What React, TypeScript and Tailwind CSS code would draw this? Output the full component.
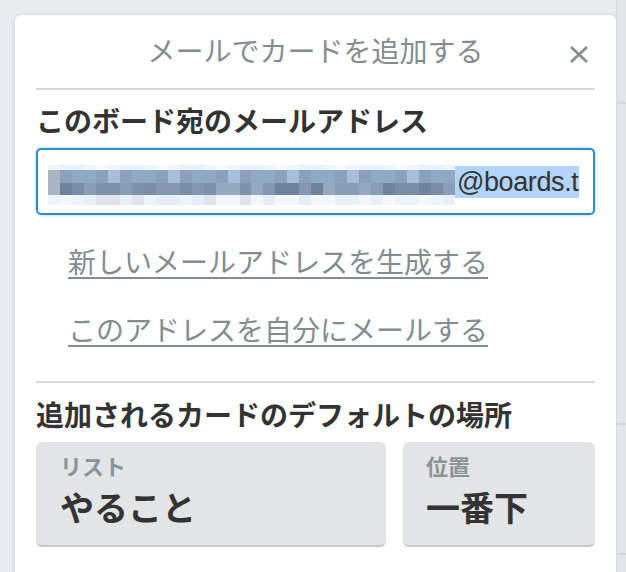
import React from "react";

const FONT = '"Liberation Sans", "Noto Sans CJK JP", sans-serif';

const rowDefs: { h: number; colors: string[] }[] = [
  { h: 5, colors: ["#eef5fc", "#e6f0fa", "#f3f8fd", "#e9f2fb", "#f6f9fd"] },
  { h: 13, colors: ["#8ea9c6", "#9ab3cf", "#7f96b2", "#a5bedb", "#8aa0bb", "#94aac4", "#7e8fa8"] },
  { h: 12, colors: ["#7a8da7", "#8a9db6", "#70839c", "#94a8c0", "#8597b0", "#7d91ab"] },
  { h: 10, colors: ["#f1f6fc", "#e5eef8", "#dfe4ea", "#edf4fb", "#e9eff6", "#f4f8fc"] },
];

function Mosaic() {
  const cols = 34;
  const w = 12;
  return (
    <div className="flex flex-col shrink-0 w-[407px] overflow-hidden">
      {rowDefs.map((row, r) => (
        <div key={r} className="flex">
          {Array.from({ length: cols }).map((_, i) => {
            let c = row.colors[(i * 7 + r * 3 + ((i * i) % 5)) % row.colors.length];
            if (i === 0 && (r === 1 || r === 2)) c = "#aab5c2";
            return (
              <div
                key={i}
                style={{ width: w, height: row.h, backgroundColor: c }}
              />
            );
          })}
        </div>
      ))}
    </div>
  );
}

export default function App() {
  return (
    <div
      className="w-[626px] h-[572px] bg-[#ebecf0] overflow-hidden flex"
      style={{ fontFamily: FONT }}
    >
      <div className="pl-[15px] pt-[15px] flex">
        <div className="w-[601px] h-[600px] bg-white rounded-[6px] shadow-[0_1px_5px_rgba(9,30,66,0.18)] flex flex-col">
          {/* header */}
          <div className="relative h-[73px] flex items-center justify-center">
            <span className="text-[28px] leading-[28px] text-[#838c91] pt-[2px]">
              メールでカードを追加する
            </span>
            <button className="absolute right-[27px] top-[31px] w-[20px] h-[17px] flex items-center justify-center">
              <svg width="20" height="17" viewBox="0 0 20 17">
                <path
                  d="M2 1 L18 16 M18 1 L2 16"
                  stroke="#838c91"
                  strokeWidth="2.6"
                  strokeLinecap="butt"
                />
              </svg>
            </button>
          </div>
          <div className="mx-[21px] h-[2px] bg-[#d6dadc]" />

          <div className="px-[21px] flex flex-col">
            <div className="mt-[19px] text-[28px] leading-[28px] font-bold text-[#333333]">
              このボード宛のメールアドレス
            </div>

            <div className="mt-[11px] h-[67px] border-2 border-[#298fca] rounded-[5px] shadow-[0_0_3px_rgba(41,143,202,0.5)] pl-[10px] flex items-start overflow-hidden">
              <div className="mt-[15px]">
                <Mosaic />
              </div>
              <span
                className="mt-[16px] bg-[#b3d4fc] text-[#333333] text-[27px] tracking-[-0.4px] leading-[32px] whitespace-nowrap pl-[2px] pr-[1px]"
                style={{ fontFamily: '"Liberation Sans", sans-serif' }}
              >
                @boards.t
              </span>
            </div>

            <div className="pl-[32px] flex flex-col items-start">
              <a className="mt-[35px] text-[28px] leading-[28px] text-[#838c91] underline decoration-2 underline-offset-[4px] cursor-pointer">
                新しいメールアドレスを生成する
              </a>
              <a className="mt-[40px] text-[28px] leading-[28px] text-[#838c91] underline decoration-2 underline-offset-[4px] cursor-pointer">
                このアドレスを自分にメールする
              </a>
            </div>

            <div className="mt-[35px] h-[2px] bg-[#d6dadc]" />

            <div className="mt-[20px] text-[28px] leading-[28px] font-bold text-[#333333]">
              追加されるカードのデフォルトの場所
            </div>

            <div className="mt-[11px] flex gap-[17px]">
              <div className="w-[350px] h-[105px] bg-[#e2e4e6] rounded-[6px] border-b-2 border-[#c4c9cc] pl-[24px] flex flex-col">
                <span className="mt-[15px] text-[22px] leading-[22px] font-bold text-[#8c9398]">
                  リスト
                </span>
                <span className="mt-[13px] text-[34px] leading-[34px] font-bold text-[#333333]">
                  やること
                </span>
              </div>
              <div className="flex-1 h-[105px] bg-[#e2e4e6] rounded-[6px] border-b-2 border-[#c4c9cc] pl-[23px] flex flex-col">
                <span className="mt-[15px] text-[22px] leading-[22px] font-bold text-[#8c9398]">
                  位置
                </span>
                <span className="mt-[13px] text-[34px] leading-[34px] font-bold text-[#333333]">
                  一番下
                </span>
              </div>
            </div>
          </div>
        </div>
      </div>
      <div className="ml-0 w-[10px] h-[572px] bg-[#e4e5e7] border-l border-[#d8dadd] flex flex-col">
        <div className="mt-[102px] h-[2px] bg-[#d3d5d8]" />
        <div className="mt-[319px] h-[2px] bg-[#d3d5d8]" />
        <div className="mt-[128px] h-[2px] bg-[#d3d5d8]" />
      </div>
    </div>
  );
}
